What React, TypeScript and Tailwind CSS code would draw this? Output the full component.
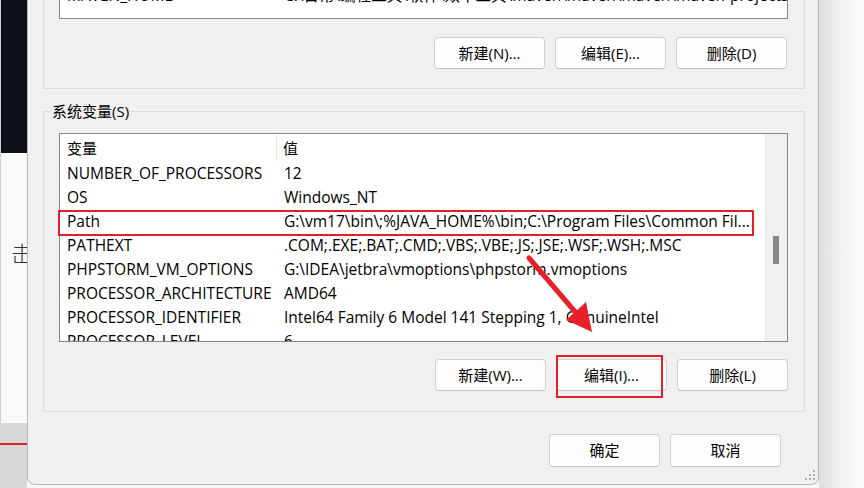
import type { ReactNode } from 'react'

const font = "font-['Open_Sans','Noto_Sans_CJK_SC',sans-serif]"

const rows: [string, string][] = [
  ['NUMBER_OF_PROCESSORS', '12'],
  ['OS', 'Windows_NT'],
  ['Path', 'G:\\vm17\\bin\\;%JAVA_HOME%\\bin;C:\\Program Files\\Common Fil...'],
  ['PATHEXT', '.COM;.EXE;.BAT;.CMD;.VBS;.VBE;.JS;.JSE;.WSF;.WSH;.MSC'],
  ['PHPSTORM_VM_OPTIONS', 'G:\\IDEA\\jetbra\\vmoptions\\phpstorm.vmoptions'],
  ['PROCESSOR_ARCHITECTURE', 'AMD64'],
  ['PROCESSOR_IDENTIFIER', 'Intel64 Family 6 Model 141 Stepping 1, GenuineIntel'],
  ['PROCESSOR_LEVEL', '6'],
]

function WinButton({ children, className = '' }: { children: ReactNode; className?: string }) {
  return (
    <div
      className={`flex items-center justify-center rounded-[4px] border border-[#d0d0d0] border-b-[#c2c2c2] bg-[#fdfdfd] text-[15px] text-black ${className}`}
    >
      {children}
    </div>
  )
}

function VarRow({ name, value }: { name: string; value: string }) {
  return (
    <div className="flex h-[24px] shrink-0 items-center whitespace-nowrap pt-[2px] text-[15.5px] text-black">
      <div className="w-[217px] shrink-0 overflow-hidden pl-[7px]">{name}</div>
      <div className="overflow-hidden pl-[7px]">{value}</div>
    </div>
  )
}

export default function App() {
  return (
    <div className={`relative flex h-[488px] w-[864px] overflow-hidden bg-[#f6f6f6] ${font}`}>
      {/* window behind, left edge */}
      <div className="flex w-[27px] shrink-0 flex-col">
        <div className="flex h-[423px] shrink-0">
          <div className="w-[4px] rounded-bl-[6px] border-r border-[#cfcfcf] bg-[#e6e6e6]" />
          <div className="flex flex-1 flex-col">
            <div className="h-[153px] bg-[#0c1017]" />
            <div className="flex-1 overflow-hidden bg-[#f9f9f9] pl-[10px] pt-[88px]">
              <span className="font-['Noto_Sans_CJK_SC',sans-serif] text-[22px] font-light leading-none text-[#333]">
                击
              </span>
            </div>
          </div>
        </div>
        <div className="flex-1 bg-[#d8d8d8]">
          <div className="mt-[20px] h-[2px] bg-[#e0242c]" />
        </div>
      </div>

      {/* dialog */}
      <div className="relative flex h-[485px] w-[792px] shrink-0 flex-col rounded-b-[8px] border-x border-b border-[#b9b9b9] bg-[#f0f0f0]">
        {/* user variables (cut off) */}
        <div className="ml-[15px] w-[762px] border-x border-b border-[#dcdcdc] pb-[19px] pl-[15px] pr-[16px]">
          <div className="h-[19px] overflow-hidden border-x border-b border-[#828790] bg-white">
            <div className="-mt-[17px]">
              <VarRow name="MAVEN_HOME" value="C:\日常\编程工具\软件\效率工具\maven\maven\maven\maven-projects" />
            </div>
          </div>
          <div className="mt-[18px] flex justify-end gap-[10px] pr-[1px]">
            <WinButton className="h-[32px] w-[111px]">新建(N)...</WinButton>
            <WinButton className="h-[32px] w-[111px]">编辑(E)...</WinButton>
            <WinButton className="h-[32px] w-[111px]">删除(D)</WinButton>
          </div>
        </div>

        {/* system variables */}
        <fieldset className="ml-[15px] mt-[14px] w-[762px] border border-[#dcdcdc] px-[15px] pb-[20px] pt-[14px]">
          <legend className="-ml-[8px] px-[1px] text-[15px] leading-[16px] text-black">系统变量(S)</legend>
          <div className="relative flex h-[209px] w-[729px] border border-[#828790] bg-white">
            <div className="flex w-[705px] flex-col overflow-hidden">
              <div className="flex h-[27px] shrink-0 items-center pt-[1px] text-[15px] text-black">
                <div className="flex h-[26px] w-[217px] items-center border-r border-[#e5e5e5] pl-[7px]">变量</div>
                <div className="pl-[6px]">值</div>
              </div>
              {rows.map(([n, v]) => (
                <VarRow key={n} name={n} value={v} />
              ))}
            </div>
            <div className="flex w-[22px] flex-col border-l border-[#e8e8e8] bg-[#f0f0f0]">
              <div className="ml-[7px] mt-[102px] h-[28px] w-[6px] bg-[#898989]" />
            </div>
            {/* highlight around Path row */}
            <div className="absolute left-[-2px] top-[76px] h-[26px] w-[696px] border-2 border-[#e3202a]" />
          </div>
          <div className="mt-[17px] flex justify-end gap-[10px] pr-[1px]">
            <WinButton className="h-[32px] w-[111px]">新建(W)...</WinButton>
            <div className="relative">
              <WinButton className="h-[32px] w-[111px]">编辑(I)...</WinButton>
              <div className="absolute left-0 top-[-4px] h-[43px] w-[107px] border-2 border-[#e3202a]" />
            </div>
            <WinButton className="h-[32px] w-[111px]">删除(L)</WinButton>
          </div>
        </fieldset>

        <div className="mt-[22px] flex justify-end gap-[10px] pr-[37px]">
          <WinButton className="h-[33px] w-[111px]">确定</WinButton>
          <WinButton className="h-[33px] w-[111px]">取消</WinButton>
        </div>

        {/* resize grip */}
        <svg className="absolute bottom-[2px] right-[2px]" width="12" height="12" viewBox="0 0 12 12">
          <g fill="#b0b0b0">
            <rect x="9" y="0" width="2" height="2" />
            <rect x="5" y="4" width="2" height="2" />
            <rect x="9" y="4" width="2" height="2" />
            <rect x="1" y="8" width="2" height="2" />
            <rect x="5" y="8" width="2" height="2" />
            <rect x="9" y="8" width="2" height="2" />
          </g>
        </svg>
      </div>

      {/* shadow on the right */}
      <div className="flex-1 bg-linear-to-r from-[#dedede] via-[#f2f2f2] to-[#fafafa]" />

      {/* red arrow annotation */}
      <svg className="pointer-events-none absolute left-0 top-0" width="864" height="488" viewBox="0 0 864 488">
        <line x1="529" y1="258" x2="577" y2="314" stroke="#e8202a" strokeWidth="5" strokeLinecap="round" />
        <polygon points="592,332 566,320 586,302" fill="#e8202a" />
      </svg>
    </div>
  )
}
